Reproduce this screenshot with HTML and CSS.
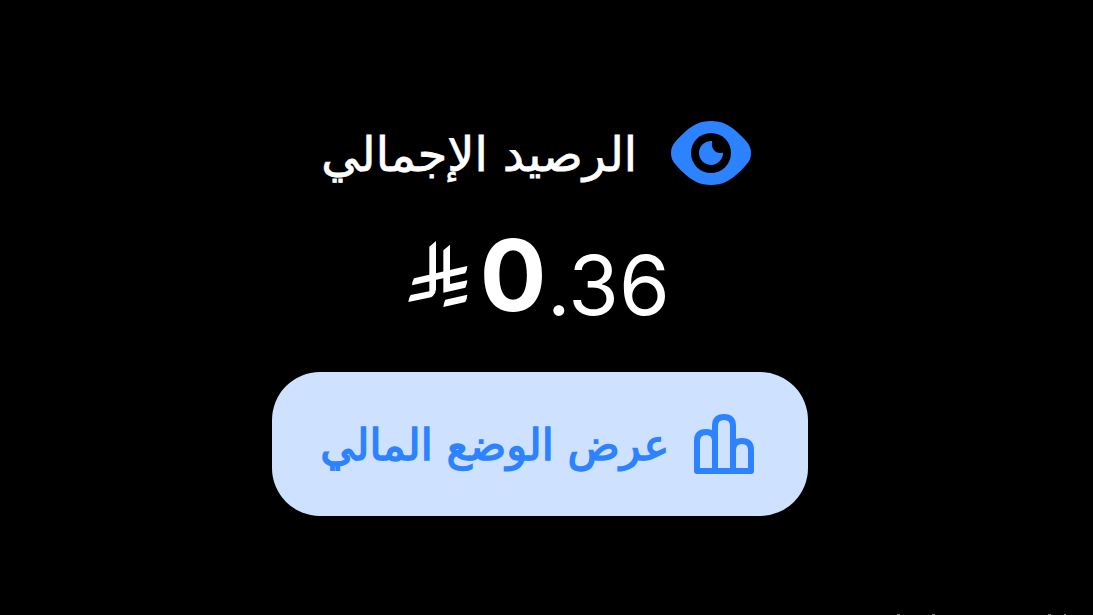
FILE: index.html
```html
<!DOCTYPE html>
<html lang="ar" dir="rtl">
<head>
<meta charset="utf-8">
<title>الرصيد الإجمالي</title>
<link rel="stylesheet" href="styles.css">
</head>
<body>
<main class="balance">
  <header class="heading">
    <svg class="eye" viewBox="0 0 80 64" aria-hidden="true">
      <path class="fill" d="M40 0C51 0 58 4 65 10C68 13 72 16 75 20C78.500 24 80 27 80 32S78.500 40 75 44C72 48 68 51 65 54C58 60 51 64 40 64S22 60 15 54C12 51 8 48 5 44C1.500 40 0 37 0 32S1.500 24 5 20C8 16 12 13 15 10C22 4 29 0 40 0Z"/>
      <circle cx="40" cy="32" r="20"/>
      <path class="fill" d="M41.300 20A12 12 0 1 0 52 31.500C46 34 39 28 41.300 20Z"/>
    </svg>
    <h1 class="title"><span class="title-text">الرصيد الإجمالي</span></h1>
  </header>
  <div class="amount" dir="ltr">
    <svg class="riyal" viewBox="20 30 186 210" aria-hidden="true">
      <path d="M87 50L107 33V178Q107 188 97 199L92 202L24 216Q25 204 31 195L87 184Z"/>
      <path d="M129 61L149 44V162L201 151Q200 164 195 173L129 188Z"/>
      <path d="M41 145L201 108Q200 121 195 130L35 166Q36 154 41 145Z"/>
      <path d="M135 209L201 194Q200 207 195 216L129 231Q130 218 135 209Z"/>
    </svg>
    <span class="whole">0</span><span class="fraction">.36</span>
  </div>
  <button class="action" type="button">
    <svg class="bars" viewBox="0 0 60 60" aria-hidden="true">
      <path d="M3 57V27Q3 18 12 18Q21 18 21 27V57M21 57V12Q21 3 30 3Q39 3 39 12V57M39 57V36Q39 27 48 27Q57 27 57 36V57M3 57H57"/>
    </svg>
    <span class="action-label"><span class="action-text">عرض الوضع المالي</span></span>
  </button>
  <svg class="next-section" viewBox="0 0 1093 1" aria-hidden="true">
    <path d="M897 0h3v1h-3zM932 0h3v1h-3zM1048 0h3v1h-3zM1064 0h2v1h-2z"/>
  </svg>
</main>
</body>
</html>
```
FILE: styles.css
```css
* { box-sizing: border-box; }
body { margin: 0; background: #000; color: #fff; font-family: Inter, "DejaVu Sans", sans-serif; }
.balance { width: 1093px; height: 615px; overflow: hidden; padding-top: 121px; }
.heading { display: flex; height: 64px; padding-right: 342px; gap: 34px; align-items: center; }
.eye { width: 80px; height: 64px; flex: none; }
.fill { fill: #2d82ff; }
.title { margin: 0; width: 320px; font: 400 47px/64px "DejaVu Sans", sans-serif; white-space: nowrap; }
.title-text, .action-text { display: inline-block; transform-origin: right center; }
.title-text { -webkit-text-stroke: 0.8px #fff; transform: translateY(2px) scaleX(1.015); }
.amount { display: flex; height: 100px; margin-top: 40px; padding-left: 406.67px; }
.riyal { width: 62px; height: 70px; margin-top: 15px; fill: #fff; flex: none; }
.whole { font-size: 99px; line-height: 100px; font-weight: 700; margin-left: 11px; }
.fraction { font-size: 82px; line-height: 100px; margin-top: 11px; margin-left: 0.5px; }
.action { display: flex; align-items: center; width: 536px; height: 144px; margin: 47px 285px 0 0; padding: 0 54px 0 0; gap: 25px; border: 0; border-radius: 48px; background: #cee2ff; color: #2d82ff; }
.bars { width: 60px; height: 60px; flex: none; fill: none; stroke: #2d82ff; stroke-width: 6; stroke-linejoin: round; stroke-linecap: round; }
.action-label { width: 348px; font: 400 43px/64px "DejaVu Sans", sans-serif; white-space: nowrap; text-align: right; }
.action-text { -webkit-text-stroke: 1.5px #2d82ff; transform: translateY(1px) scaleX(1.005); }
.next-section { display: block; width: 1093px; height: 1px; margin-top: 98px; fill: #777; }
```
